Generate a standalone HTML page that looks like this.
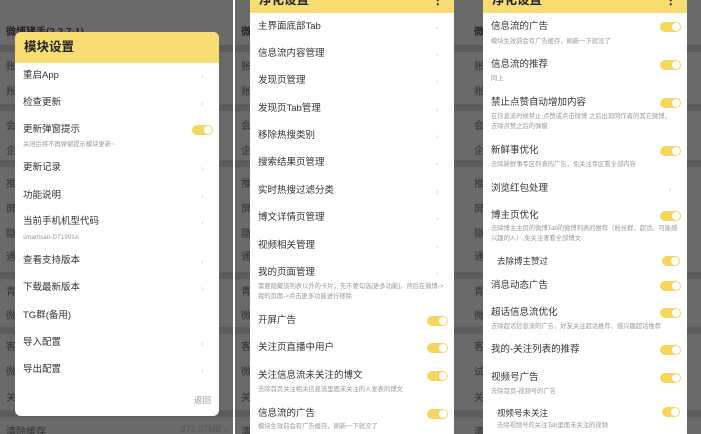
<!DOCTYPE html>
<html><head><meta charset="utf-8"><style>
*{margin:0;padding:0;box-sizing:border-box}
body{width:701px;height:434px;overflow:hidden;background:#fff;font-family:"Liberation Sans","Noto Sans CJK SC",sans-serif;position:relative}
.p{position:absolute;top:0;width:233px;height:434px;background:#6a6a6a;overflow:hidden}
.band{position:absolute;left:0;right:0;height:7px;background:#5c5c5c}
.bl{position:absolute;left:6px;font-size:10px;color:#333}
.bc{position:absolute;right:6px;font-size:9px;color:#555}
.d{position:absolute;left:15px;width:204px;background:#fff;border-radius:6px;overflow:hidden}
.h{position:absolute;left:0;right:0;background:#f7dd72;font-size:12.5px;font-weight:bold;color:#222;padding-left:9px}
.t{position:absolute;left:8px;font-size:9.5px;color:#333;white-space:nowrap;line-height:12px}
.s{position:absolute;left:8px;font-size:6.3px;color:#999;white-space:nowrap;line-height:10px}
.c{position:absolute;left:186px;font-size:8px;color:#ccc}
.g{position:absolute;left:177px;width:21px;height:10px;border-radius:5px;background:#f5d65f}
.g:after{content:"";position:absolute;right:1px;top:1px;width:8px;height:8px;border-radius:4px;background:#fff}
</style></head><body>

<!-- Panel 1 -->
<div class="p" style="left:0">
<div class="band" style="top:45px"></div><div class="band" style="top:104px"></div><div class="band" style="top:160px"></div><div class="band" style="top:272px"></div><div class="band" style="top:327px"></div><div class="band" style="top:410px"></div>
<div class="bl" style="top:23px;color:#222;font-weight:bold">微博猪手(2.2.7-1)</div>
<div class="bl" style="top:58px">账</div><div class="bl" style="top:83px">账</div><div class="bl" style="top:117px">会</div><div class="bl" style="top:142px">企</div><div class="bl" style="top:175px">推</div><div class="bl" style="top:200px">屏</div><div class="bl" style="top:225px">隐</div><div class="bl" style="top:248px">通</div><div class="bl" style="top:283px">青</div><div class="bl" style="top:307px">微</div><div class="bl" style="top:338px">客</div><div class="bl" style="top:363px">微</div><div class="bl" style="top:389px">关</div>
<div class="bl" style="top:423px">清除缓存</div><div class="bc" style="top:424px">373.07MB ›</div>
<div class="d" style="top:32px;height:384px">
<div class="h" style="top:0;height:31px;line-height:30px">模块设置</div>
<div class="t" style="top:38px">重启App</div><div class="c" style="top:40px">›</div>
<div class="t" style="top:65px">检查更新</div><div class="c" style="top:67px">›</div>
<div class="t" style="top:92px">更新弹窗提示</div><div class="g" style="top:93px"></div>
<div class="s" style="top:108px">关闭后将不再弹窗提示模块更新~</div>
<div class="t" style="top:130px">更新记录</div><div class="c" style="top:132px">›</div>
<div class="t" style="top:158px">功能说明</div><div class="c" style="top:160px">›</div>
<div class="t" style="top:184px">当前手机机型代码</div><div class="c" style="top:186px">›</div>
<div class="s" style="top:201px">smartisan-DT1901A</div>
<div class="t" style="top:223px">查看支持版本</div><div class="c" style="top:225px">›</div>
<div class="t" style="top:250px">下载最新版本</div><div class="c" style="top:252px">›</div>
<div class="t" style="top:278px">TG群(备用)</div>
<div class="t" style="top:305px">导入配置</div><div class="c" style="top:307px">›</div>
<div class="t" style="top:332px">导出配置</div><div class="c" style="top:334px">›</div>
<div class="t" style="top:362px;left:179px;font-size:8.5px;color:#999">返回</div>
</div>
</div>

<!-- Panel 2 -->
<div class="p" style="left:235px">
<div class="band" style="top:45px"></div><div class="band" style="top:104px"></div><div class="band" style="top:160px"></div><div class="band" style="top:272px"></div><div class="band" style="top:327px"></div><div class="band" style="top:410px"></div>
<div class="bl" style="top:23px;color:#222;font-weight:bold">微</div>
<div class="bl" style="top:58px">账</div><div class="bl" style="top:83px">账</div><div class="bl" style="top:117px">会</div><div class="bl" style="top:142px">企</div><div class="bl" style="top:175px">推</div><div class="bl" style="top:200px">屏</div><div class="bl" style="top:225px">隐</div><div class="bl" style="top:248px">通</div><div class="bl" style="top:283px">青</div><div class="bl" style="top:307px">微</div><div class="bl" style="top:338px">客</div><div class="bl" style="top:363px">微</div><div class="bl" style="top:389px">关</div><div class="bl" style="top:423px">清</div>
<div class="d" style="top:-20px;height:470px;border-radius:0">
<div class="h" style="top:0;height:33px;line-height:40px">净化设置<span style="position:absolute;right:10px">⋮</span></div>
<div class="t" style="top:41px">主界面底部Tab</div><div class="c" style="top:43px">›</div>
<div class="t" style="top:68px">信息流内容管理</div><div class="c" style="top:70px">›</div>
<div class="t" style="top:95px">发现页管理</div><div class="c" style="top:97px">›</div>
<div class="t" style="top:123px">发现页Tab管理</div><div class="c" style="top:125px">›</div>
<div class="t" style="top:150px">移除热搜类别</div><div class="c" style="top:152px">›</div>
<div class="t" style="top:177px">搜索结果页管理</div><div class="c" style="top:179px">›</div>
<div class="t" style="top:205px">实时热搜过滤分类</div><div class="c" style="top:207px">›</div>
<div class="t" style="top:232px">博文详情页管理</div><div class="c" style="top:234px">›</div>
<div class="t" style="top:260px">视频相关管理</div><div class="c" style="top:262px">›</div>
<div class="t" style="top:287px">我的页面管理</div><div class="c" style="top:289px">›</div>
<div class="s" style="top:302px">需要隐藏该列表以外的卡片，先不要勾选[更多功能]，然后在微博-&gt;</div>
<div class="s" style="top:312px">我的页面-&gt;点击更多功能进行移除</div>
<div class="t" style="top:335px">开屏广告</div><div class="g" style="top:336px"></div>
<div class="t" style="top:362px">关注页直播中用户</div><div class="g" style="top:363px"></div>
<div class="t" style="top:390px">关注信息流未关注的博文</div><div class="g" style="top:391px"></div>
<div class="s" style="top:405px">去除首页关注相关信息流里面未关注的人发表的博文</div>
<div class="t" style="top:428px">信息流的广告</div><div class="g" style="top:429px"></div>
<div class="s" style="top:442px">模块生效前会有广告缓存，刷新一下就没了</div>
</div>
</div>

<!-- Panel 3 -->
<div class="p" style="left:468px">
<div class="band" style="top:45px"></div><div class="band" style="top:104px"></div><div class="band" style="top:160px"></div><div class="band" style="top:272px"></div><div class="band" style="top:327px"></div><div class="band" style="top:410px"></div>
<div class="bl" style="top:23px;color:#222;font-weight:bold">微</div>
<div class="bl" style="top:58px">账</div><div class="bl" style="top:83px">账</div><div class="bl" style="top:117px">会</div><div class="bl" style="top:142px">企</div><div class="bl" style="top:175px">推</div><div class="bl" style="top:200px">屏</div><div class="bl" style="top:225px">隐</div><div class="bl" style="top:248px">通</div><div class="bl" style="top:283px">青</div><div class="bl" style="top:307px">微</div><div class="bl" style="top:338px">客</div><div class="bl" style="top:363px">试</div><div class="bl" style="top:389px">关</div><div class="bl" style="top:423px">清</div>
<div class="d" style="top:-20px;height:470px;border-radius:0">
<div class="h" style="top:0;height:33px;line-height:40px">净化设置<span style="position:absolute;right:10px">⋮</span></div>
<div class="t" style="top:41px">信息流的广告</div><div class="g" style="top:42px"></div>
<div class="s" style="top:57px">模块生效前会有广告缓存，刷新一下就没了</div>
<div class="t" style="top:79px">信息流的推荐</div><div class="g" style="top:80px"></div>
<div class="s" style="top:94px">同上</div>
<div class="t" style="top:117px">禁止点赞自动增加内容</div><div class="g" style="top:118px"></div>
<div class="s" style="top:132px">在信息流时候禁止:点赞或点击微博 之后出现同作者的其它微博，</div>
<div class="s" style="top:142px">去除点赞之后的弹窗</div>
<div class="t" style="top:165px">新鲜事优化</div><div class="g" style="top:166px"></div>
<div class="s" style="top:180px">去除新鲜事专区列表的广告，免关注专区看全部内容</div>
<div class="t" style="top:203px">浏览红包处理</div><div class="c" style="top:205px">›</div>
<div class="t" style="top:230px">博主页优化</div><div class="g" style="top:231px"></div>
<div class="s" style="top:244px">去除博主主页的微博Tab的微博列表的推荐（粉丝群、超话、可能感</div>
<div class="s" style="top:254px">兴趣的人）,免关注查看全部博文</div>
<div class="t" style="top:275px;left:14px;font-size:8.5px">去除博主赞过</div><div class="g" style="top:276px;left:179px;width:18px"></div>
<div class="t" style="top:300px">消息动态广告</div><div class="g" style="top:301px"></div>
<div class="t" style="top:327px">超话信息流优化</div><div class="g" style="top:328px"></div>
<div class="s" style="top:342px">去除超话信息流的广告、好友关注超话推荐、感兴趣超话推荐</div>
<div class="t" style="top:364px">我的-关注列表的推荐</div><div class="g" style="top:365px"></div>
<div class="t" style="top:392px">视频号广告</div><div class="g" style="top:393px"></div>
<div class="s" style="top:407px">去除首页-视频号的广告</div>
<div class="t" style="top:427px;left:14px;font-size:8.5px">视频号未关注</div><div class="g" style="top:427px;left:179px;width:18px"></div>
<div class="s" style="top:441px;left:14px">去除视频号的关注Tab里面未关注的视频</div>
</div>
</div>
</body></html>
